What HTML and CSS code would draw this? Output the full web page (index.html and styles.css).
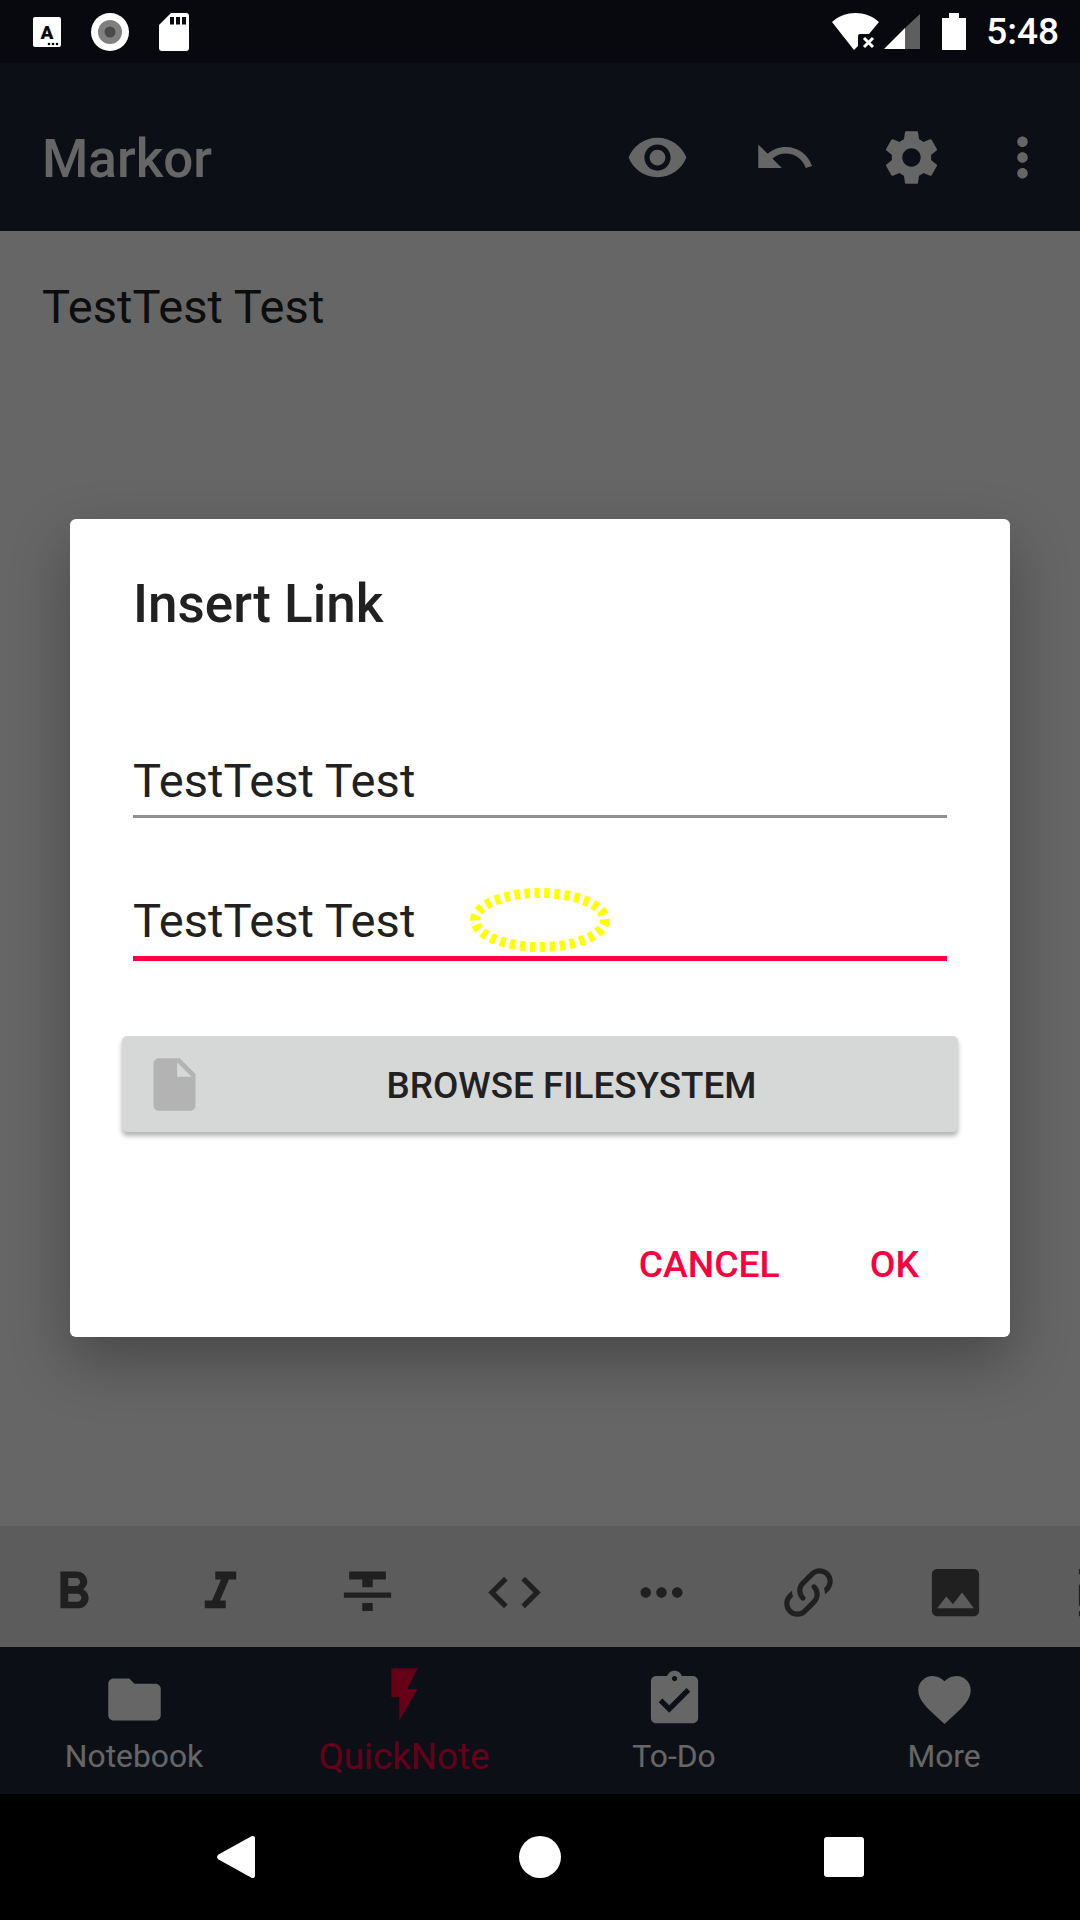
FILE: index.html
```html
<!DOCTYPE html>
<html lang="en">
<head>
    <meta charset="UTF-8">
    <meta name="viewport" content="width=device-width, initial-scale=1.0">
    <title>Markor</title>
    <link rel="stylesheet" href="styles.css">
</head>
<body>
    <div id="screen">
        <div class="statusbar">
            <div class="status-left">
                <svg class="st-a" viewBox="0 0 28 30">
                    <rect width="28" height="30" rx="2" fill="#fff"/>
                    <text x="14" y="22" class="st-a-letter" text-anchor="middle">A</text>
                    <circle cx="16" cy="27" r="1.3"/><circle cx="20" cy="27" r="1.3"/><circle cx="24" cy="27" r="1.3"/>
                </svg>
                <svg class="st-rec" viewBox="0 0 38 38">
                    <circle cx="19" cy="19" r="19" fill="#fff"/>
                    <circle cx="19" cy="19" r="12" fill="#808080"/>
                    <circle cx="19" cy="19" r="5.5" fill="#4a4a4a"/>
                </svg>
                <svg class="st-sd" viewBox="0 0 30 38">
                    <path fill="#fff" d="M12 0h15a3 3 0 0 1 3 3v32a3 3 0 0 1-3 3H3a3 3 0 0 1-3-3V12z"/>
                    <rect x="11" y="4" width="4" height="7.5" fill="#08090e"/>
                    <rect x="17" y="4" width="4" height="7.5" fill="#08090e"/>
                    <rect x="23" y="4" width="4" height="7.5" fill="#08090e"/>
                </svg>
            </div>
            <div class="status-right">
                <svg class="st-wifi" viewBox="0 0 48 38">
                    <path fill="#fff" d="M0 9C13-3 34-3 47 9L37 21H28q-2 0-2 2V33l-4 4z"/>
                    <path stroke="#fff" stroke-width="3" d="M32 25l9 9M41 25l-9 9"/>
                </svg>
                <svg class="st-signal" viewBox="0 0 36 36">
                    <polygon fill="#fff" points="0,35 21,14 21,35"/>
                    <polygon fill="#5e5e5e" points="21,14 36,0 36,35 21,35"/>
                </svg>
                <svg class="st-battery" viewBox="0 0 24 37">
                    <path fill="#fff" d="M7 0h10v5h7v32H0V5h7z"/>
                </svg>
                <span class="clock">5:48</span>
            </div>
        </div>

        <div class="appbar">
            <span class="app-title">Markor</span>
            <div class="app-actions">
                <div class="action"><svg class="icon" viewBox="0 0 24 24"><path d="M12 4.5C7 4.5 2.73 7.61 1 12c1.730 4.390 6 7.500 11 7.500s9.270-3.110 11-7.500c-1.730-4.390-6-7.500-11-7.500zM12 17c-2.760 0-5-2.240-5-5s2.240-5 5-5 5 2.240 5 5-2.240 5-5 5zm0-8c-1.660 0-3 1.340-3 3s1.340 3 3 3 3-1.340 3-3-1.340-3-3-3z"/></svg></div>
                <div class="action"><svg class="icon" viewBox="0 0 24 24"><path d="M12.5 8c-2.65 0-5.05.99-6.9 2.6L2 7v9h9l-3.62-3.62c1.39-1.16 3.16-1.88 5.12-1.88 3.54 0 6.55 2.31 7.6 5.5l2.37-.78C21.08 11.03 17.15 8 12.5 8z"/></svg></div>
                <div class="action"><svg class="icon" viewBox="0 0 24 24"><path d="M19.43 12.98c.04-.32.07-.64.07-.98s-.03-.66-.07-.98l2.11-1.65c.19-.15.24-.42.12-.64l-2-3.46c-.12-.22-.39-.3-.61-.22l-2.49 1c-.52-.4-1.08-.73-1.69-.98l-.38-2.65C14.46 2.18 14.25 2 14 2h-4c-.25 0-.46.18-.49.42l-.38 2.65c-.61.25-1.17.59-1.69.98l-2.49-1c-.23-.09-.49 0-.61.22l-2 3.46c-.13.22-.07.49.12.64l2.11 1.65c-.04.32-.07.65-.07.98s.03.66.07.98l-2.11 1.65c-.19.15-.24.42-.12.64l2 3.46c.12.22.39.3.61.22l2.49-1c.52.4 1.08.73 1.69.98l.38 2.65c.03.24.24.42.49.42h4c.25 0 .46-.18.49-.42l.38-2.65c.61-.25 1.17-.59 1.69-.98l2.49 1c.23.09.49 0 .61-.22l2-3.46c.12-.22.07-.49-.12-.64l-2.11-1.65zM12 15.5c-1.93 0-3.5-1.57-3.5-3.5s1.57-3.5 3.5-3.5 3.5 1.57 3.5 3.5-1.57 3.5-3.5 3.5z"/></svg></div>
                <div class="action action-more"><svg class="icon" viewBox="0 0 24 24"><path d="M12 8c1.1 0 2-.9 2-2s-.9-2-2-2-2 .9-2 2 .9 2 2 2zm0 2c-1.1 0-2 .9-2 2s.9 2 2 2 2-.9 2-2-.9-2-2-2zm0 6c-1.1 0-2 .9-2 2s.9 2 2 2 2-.9 2-2-.9-2-2-2z"/></svg></div>
            </div>
        </div>

        <div class="editor">TestTest Test</div>

        <div class="format-bar">
            <div class="fmt"><svg class="icon" viewBox="0 0 24 24"><path d="M15.6 10.79c.97-.67 1.65-1.77 1.65-2.79 0-2.26-1.75-4-4-4H7v14h7.04c2.09 0 3.71-1.7 3.71-3.79 0-1.52-.86-2.82-2.15-3.42zM10 6.5h3c.83 0 1.5.67 1.5 1.5s-.67 1.5-1.5 1.5h-3v-3zm3.5 9H10v-3h3.5c.83 0 1.5.67 1.5 1.5s-.67 1.5-1.5 1.5z"/></svg></div>
            <div class="fmt"><svg class="icon" viewBox="0 0 24 24"><path d="M10 4v3h2.21l-3.42 8H6v3h8v-3h-2.21l3.42-8H18V4z"/></svg></div>
            <div class="fmt"><svg class="icon" viewBox="0 0 24 24"><path d="M10 19h4v-3h-4v3zM5 4v3h5v3h4V7h5V4H5zM3 14h18v-2H3v2z"/></svg></div>
            <div class="fmt"><svg class="icon" viewBox="0 0 24 24"><path d="M9.4 16.6L4.8 12l4.6-4.6L8 6l-6 6 6 6 1.4-1.4zm5.2 0l4.6-4.6-4.6-4.6L16 6l6 6-6 6-1.4-1.4z"/></svg></div>
            <div class="fmt"><svg class="icon" viewBox="0 0 24 24"><path d="M6 10c-1.1 0-2 .9-2 2s.9 2 2 2 2-.9 2-2-.9-2-2-2zm12 0c-1.1 0-2 .9-2 2s.9 2 2 2 2-.9 2-2-.9-2-2-2zm-6 0c-1.1 0-2 .9-2 2s.9 2 2 2 2-.9 2-2-.9-2-2-2z"/></svg></div>
            <div class="fmt"><svg class="icon" viewBox="0 0 24 24"><path d="M10.59,13.41C11,13.8 11,14.44 10.59,14.83C10.2,15.22 9.56,15.22 9.17,14.83C7.22,12.88 7.22,9.71 9.17,7.76V7.76L12.71,4.22C14.66,2.27 17.83,2.27 19.78,4.22C21.73,6.17 21.73,9.34 19.78,11.29L18.29,12.78C18.3,11.96 18.17,11.14 17.89,10.36L18.36,9.88C19.54,8.71 19.54,6.81 18.36,5.64C17.19,4.46 15.29,4.46 14.12,5.64L10.59,9.17C9.41,10.34 9.41,12.24 10.59,13.41M13.41,9.17C13.8,8.78 14.44,8.78 14.83,9.17C16.78,11.12 16.78,14.29 14.83,16.24V16.24L11.29,19.78C9.34,21.73 6.17,21.73 4.22,19.78C2.27,17.83 2.27,14.66 4.22,12.71L5.71,11.22C5.7,12.04 5.83,12.86 6.11,13.65L5.64,14.12C4.46,15.29 4.46,17.19 5.64,18.36C6.81,19.54 8.71,19.54 9.88,18.36L13.41,14.83C14.59,13.66 14.59,11.76 13.41,10.59C13,10.2 13,9.56 13.41,9.17Z"/></svg></div>
            <div class="fmt"><svg class="icon" viewBox="0 0 24 24"><path d="M21 19V5c0-1.1-.9-2-2-2H5c-1.1 0-2 .9-2 2v14c0 1.1.9 2 2 2h14c1.1 0 2-.9 2-2zM8.5 13.5l2.5 3.01L14.5 12l4.5 6H5l3.5-4.5z"/></svg></div>
            <div class="fmt"><svg class="icon" viewBox="0 0 24 24"><path d="M3 3h2v2H3zM3 9h2v8H3zM3 19h2v2H3z"/></svg></div>
        </div>

        <div class="bottom-nav">
            <div class="tab">
                <svg class="icon" viewBox="0 0 24 24"><path d="M10 4H4c-1.1 0-1.99.9-1.99 2L2 18c0 1.1.9 2 2 2h16c1.1 0 2-.9 2-2V8c0-1.1-.9-2-2-2h-8l-2-2z"/></svg>
                <span class="tab-label">Notebook</span>
            </div>
            <div class="tab tab-active">
                <svg class="icon" viewBox="0 0 24 24"><path d="M7 2v11h3v9l7-12h-4l4-8z"/></svg>
                <span class="tab-label">QuickNote</span>
            </div>
            <div class="tab">
                <svg class="icon" viewBox="0 0 24 24"><path d="M19 3h-4.18C14.4 1.84 13.3 1 12 1c-1.3 0-2.4.84-2.82 2H5c-1.1 0-2 .9-2 2v14c0 1.1.9 2 2 2h14c1.1 0 2-.9 2-2V5c0-1.1-.9-2-2-2zm-7 0c.55 0 1 .45 1 1s-.45 1-1 1-1-.45-1-1 .45-1 1-1zm-2 14l-4-4 1.41-1.41L10 14.17l6.59-6.59L18 9l-8 8z"/></svg>
                <span class="tab-label">To-Do</span>
            </div>
            <div class="tab">
                <svg class="icon" viewBox="0 0 24 24"><path d="M12 21.35l-1.45-1.32C5.4 15.36 2 12.28 2 8.5 2 5.42 4.42 3 7.5 3c1.74 0 3.41.81 4.5 2.09C13.09 3.81 14.76 3 16.5 3 19.58 3 22 5.42 22 8.5c0 3.78-3.4 6.86-8.55 11.54L12 21.35z"/></svg>
                <span class="tab-label">More</span>
            </div>
        </div>

        <div class="navbar">
            <svg class="nav-back" viewBox="0 0 38 42"><path fill="#fff" d="M34 .6c2-1.4 4-.4 4 2v37c0 2.400-2 3.400-4 2L1.500 23.500c-2-1.500-2-3.500 0-5z"/></svg>
            <div class="nav-home"></div>
            <div class="nav-recent"></div>
        </div>

        <div class="scrim">
            <div class="dialog">
                <h2 class="dialog-title">Insert Link</h2>
                <div class="field">TestTest Test</div>
                <div class="field field-focus">
                    TestTest Test
                    <svg class="selection-ring" viewBox="0 0 140 64">
                        <ellipse cx="70" cy="32" rx="65" ry="27" fill="none" stroke="#ffff00" stroke-width="10" stroke-dasharray="5.5 4.5"/>
                    </svg>
                </div>
                <div class="browse-btn">
                    <svg class="icon" viewBox="0 0 24 24"><path d="M6 2c-1.100 0-1.990.9-1.990 2L4 20c0 1.100.89 2 1.990 2H18c1.100 0 2-.9 2-2V8l-6-6H6zm7 7V3.500L18.500 9H13z"/></svg>
                    <span class="browse-label">BROWSE FILESYSTEM</span>
                </div>
                <div class="dialog-actions">
                    <span class="dialog-action">CANCEL</span>
                    <span class="dialog-action">OK</span>
                </div>
            </div>
        </div>
    </div>
</body>
</html>
```

FILE: styles.css
```css
* {
    box-sizing: border-box;
}

body {
    margin: 0;
    font-family: Roboto, "Liberation Sans", sans-serif;
    background-color: #000;
}

#screen {
    position: relative;
    display: flex;
    flex-direction: column;
    width: 1080px;
    height: 1920px;
    overflow: hidden;
    background-color: #fff;
}

.icon {
    display: block;
    width: 63px;
    height: 63px;
    fill: currentColor;
}

/* status bar */
.statusbar {
    display: flex;
    justify-content: space-between;
    align-items: center;
    height: 63px;
    padding: 0 21px 0 33px;
    background-color: #08090e;
    position: relative;
    z-index: 2;
}

.status-left,
.status-right {
    display: flex;
    align-items: center;
}

.status-left {
    gap: 30px;
}

.st-a {
    width: 28px;
    height: 30px;
}

.st-a-letter {
    font-family: Roboto, sans-serif;
    font-size: 19px;
    font-weight: 900;
    fill: #08090e;
}

.st-rec {
    width: 38px;
    height: 38px;
}

.st-sd {
    width: 30px;
    height: 38px;
}

.st-wifi {
    width: 48px;
    height: 38px;
}

.st-signal {
    width: 36px;
    height: 36px;
    margin-left: 4px;
}

.st-battery {
    width: 24px;
    height: 37px;
    margin-left: 22px;
}

.clock {
    margin-left: 20px;
    color: #fff;
    font-size: 37px;
    font-weight: 500;
    line-height: 44px;
}

/* app bar */
.appbar {
    display: flex;
    justify-content: space-between;
    align-items: center;
    height: 168px;
    padding: 21px 10px 0 42px;
    background-color: #212637;
    color: #fff;
}

.app-title {
    padding-top: 2px;
    font-size: 53px;
    font-weight: 500;
}

.app-actions {
    display: flex;
}

.action {
    display: flex;
    justify-content: center;
    width: 127px;
}

.action-more {
    width: 95px;
}

/* editor */
.editor {
    flex: 1;
    padding: 48px 42px;
    color: #212121;
    font-size: 47.1px;
    line-height: 56px;
}

.format-bar {
    display: flex;
    height: 121px;
    padding-top: 35px;
    background-color: #e6e6e6;
    color: #525252;
}

.fmt {
    display: flex;
    flex: 0 0 147px;
    justify-content: center;
}

.bottom-nav {
    display: grid;
    grid-template-columns: repeat(4, 270px);
    height: 147px;
    background-color: #212637;
    color: #fff;
}

.tab {
    display: flex;
    flex-direction: column;
    align-items: center;
    padding: 21px 2px 0 0;
}

.tab-label {
    margin-top: 5px;
    font-size: 31.8px;
    line-height: 40px;
    height: 40px;
}

.tab-active {
    padding-top: 16px;
    color: #ff0040;
}

.tab-active .tab-label {
    margin-top: 9px;
    font-size: 36.75px;
    line-height: 44px;
    height: 44px;
}

.navbar {
    position: relative;
    z-index: 2;
    display: grid;
    grid-template-columns: repeat(3, 304px);
    justify-content: center;
    justify-items: center;
    align-items: center;
    height: 126px;
    background-color: #000;
}

.nav-back {
    width: 38px;
    height: 42px;
}

.nav-home {
    width: 42px;
    height: 42px;
    border-radius: 50%;
    background-color: #fff;
}

.nav-recent {
    width: 40px;
    height: 40px;
    border-radius: 3px;
    background-color: #fff;
}

/* dialog */
.scrim {
    position: absolute;
    top: 63px;
    left: 0;
    right: 0;
    bottom: 126px;
    display: flex;
    justify-content: center;
    align-items: center;
    padding-bottom: 1px;
    background-color: rgba(0, 0, 0, 0.6);
}

.dialog {
    width: 940px;
    height: 818px;
    padding: 53px 63px 0;
    border-radius: 6px;
    background-color: #fff;
    color: #212121;
    box-shadow: 0 24px 60px rgba(0, 0, 0, 0.3);
}

.dialog-title {
    margin: 0 0 117px;
    font-size: 53px;
    font-weight: 500;
    line-height: 64px;
}

.field {
    position: relative;
    height: 65px;
    padding-bottom: 6px;
    border-bottom: 3px solid #8f8f8f;
    font-size: 47.1px;
    line-height: 56px;
}

.field-focus {
    height: 68px;
    margin-top: 75px;
    padding-bottom: 7px;
    border-bottom: 5px solid #ff0040;
}

.selection-ring {
    position: absolute;
    top: -5px;
    left: 337px;
    width: 140px;
    height: 64px;
}

.browse-btn {
    display: flex;
    align-items: center;
    height: 96px;
    margin: 75px -11px 0;
    padding: 0 21px;
    border-radius: 5px;
    background-color: #d6d7d7;
    box-shadow: 0 4px 5px rgba(0, 0, 0, 0.3);
}

.browse-btn .icon {
    flex: none;
    color: #b3b3b3;
}

.browse-label {
    flex: 1;
    padding-top: 2px;
    font-size: 36.8px;
    font-weight: 500;
    text-align: center;
}

.dialog-actions {
    display: flex;
    justify-content: flex-end;
    gap: 90px;
    margin-top: 110px;
    padding-right: 28px;
    color: #fb0040;
    font-size: 37.3px;
    font-weight: 500;
    line-height: 44px;
}
```
